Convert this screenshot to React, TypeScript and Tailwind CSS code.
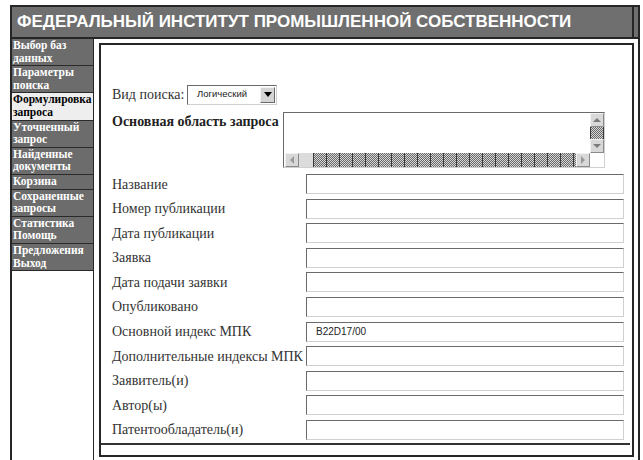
const serif = "font-['Liberation_Serif',serif]";
const sans = "font-['Liberation_Sans',Arial,sans-serif]";

type NavItem = { lines: string[]; active?: boolean };

const navItems: NavItem[] = [
  { lines: ["Выбор баз", "данных"] },
  { lines: ["Параметры", "поиска"] },
  { lines: ["Формулировка", "запроса"], active: true },
  { lines: ["Уточненный", "запрос"] },
  { lines: ["Найденные", "документы"] },
  { lines: ["Корзина"] },
  { lines: ["Сохраненные", "запросы"] },
  { lines: ["Статистика", "Помощь"] },
  { lines: ["Предложения", "Выход"] },
];

const fields: { label: string; value?: string }[] = [
  { label: "Название" },
  { label: "Номер публикации" },
  { label: "Дата публикации" },
  { label: "Заявка" },
  { label: "Дата подачи заявки" },
  { label: "Опубликовано" },
  { label: "Основной индекс МПК", value: "B22D17/00" },
  { label: "Дополнительные индексы МПК" },
  { label: "Заявитель(и)" },
  { label: "Автор(ы)" },
  { label: "Патентообладатель(и)" },
];

// dithered scrollbar track with block separators
const dither =
  "[background:repeating-linear-gradient(90deg,#3a3a3a_0_1px,transparent_1px_13px),repeating-conic-gradient(#6a6a6a_0_25%,#d6d6d6_0_50%)_0_0/2px_2px]";

function ArrowButton({ dir }: { dir: "up" | "down" | "left" | "right" }) {
  const tri = {
    up: "border-x-[4px] border-x-transparent border-b-[4px] border-b-[#7a7a7a]",
    down: "border-x-[4px] border-x-transparent border-t-[4px] border-t-[#7a7a7a]",
    left: "border-y-[4px] border-y-transparent border-r-[4px] border-r-[#9a9a9a]",
    right: "border-y-[4px] border-y-transparent border-l-[4px] border-l-[#9a9a9a]",
  }[dir];
  return (
    <div className="flex h-[14px] w-[14px] items-center justify-center border border-t-[#f2f2f2] border-l-[#f2f2f2] border-r-[#8a8a8a] border-b-[#8a8a8a] bg-[#d8d8d8]">
      <div className={`h-0 w-0 ${tri}`} />
    </div>
  );
}

function QueryArea() {
  return (
    <div className="flex h-[56px] w-[322px] flex-col border border-t-[#6a6a6a] border-l-[#6a6a6a] border-r-[#d0d0d0] border-b-[#d0d0d0] bg-white">
      <div className="flex flex-1">
        <div className="flex-1" />
        <div className="flex w-[14px] flex-col">
          <ArrowButton dir="up" />
          <div className={`flex-1 ${dither}`} />
          <ArrowButton dir="down" />
        </div>
      </div>
      <div className="flex h-[14px] pl-[1px]">
        <ArrowButton dir="left" />
        <div className="w-[14px] bg-[#dcdcdc]" />
        <div className={`flex-1 ${dither}`} />
        <ArrowButton dir="right" />
        <div className="w-[14px] bg-white" />
      </div>
    </div>
  );
}

function SearchTypeSelect() {
  return (
    <div className="flex h-[20px] w-[90px] items-center border border-t-[#6a6a6a] border-l-[#6a6a6a] border-r-[#d0d0d0] border-b-[#d0d0d0] bg-white">
      <span className={`flex-1 pl-[9px] text-[9.5px] text-[#222] ${sans}`}>
        Логический
      </span>
      <div className="mr-[1px] flex h-[16px] w-[15px] items-center justify-center border border-t-[#f2f2f2] border-l-[#f2f2f2] border-r-[#6a6a6a] border-b-[#6a6a6a] bg-[#d4d4d4]">
        <div className="h-0 w-0 border-x-[4px] border-x-transparent border-t-[5px] border-t-black" />
      </div>
    </div>
  );
}

export default function App() {
  return (
    <div className="min-h-[460px] bg-white pl-[10px] pt-[5px]">
      <div className="w-[630px] border-2 border-[#262626]">
        <div className="flex h-[32px] border-b-2 border-[#262626] bg-[#6f6f6f]">
          <div className="flex flex-1 items-center overflow-hidden border-r-2 border-[#262626] pl-[5px]">
            <h1
              className={`whitespace-nowrap text-[17px] font-bold text-white ${sans}`}
            >
              ФЕДЕРАЛЬНЫЙ ИНСТИТУТ ПРОМЫШЛЕННОЙ СОБСТВЕННОСТИ
            </h1>
          </div>
          <div className="w-[4px]" />
        </div>

        <div className="flex h-[425px]">
          <nav className="w-[82px] border-r border-[#262626]">
            {navItems.map((item) => (
              <div
                key={item.lines[0]}
                className={`border-b border-[#2a2a2a] pb-[1px] pl-[1px] text-[11.5px] font-bold leading-[12.6px] ${serif} ${
                  item.active
                    ? "bg-[#eeeeee] text-black"
                    : "bg-[#6c6c6c] text-white"
                }`}
              >
                {item.lines.map((line) => (
                  <div key={line} className="whitespace-nowrap">
                    {line}
                  </div>
                ))}
              </div>
            ))}
          </nav>

          <div className="w-[5px]" />

          <main className="mt-[4px] flex h-[414px] w-[535px] flex-col border-2 border-[#262626] pl-[11px] pt-[39px]">
            <div className="flex items-center">
              <span
                className={`w-[75px] whitespace-nowrap text-[14px] text-[#333] ${serif}`}
              >
                Вид поиска:
              </span>
              <SearchTypeSelect />
            </div>

            <div className="mt-[7px] flex">
              <span
                className={`w-[171px] whitespace-nowrap pt-[1px] text-[14px] font-bold leading-[17px] text-[#222] ${serif}`}
              >
                Основная область запроса
              </span>
              <QueryArea />
            </div>

            <div className="mt-[6px] grid grid-cols-[194px_318px] gap-y-[4.6px]">
              {fields.map((field) => (
                <div key={field.label} className="contents">
                  <span
                    className={`flex h-[20px] items-center whitespace-nowrap text-[14px] text-[#333] ${serif}`}
                  >
                    {field.label}
                  </span>
                  <div className="flex h-[20px] items-center border border-t-[#6a6a6a] border-l-[#6a6a6a] border-r-[#d0d0d0] border-b-[#d0d0d0] bg-white pl-[9px]">
                    {field.value ? (
                      <span className={`text-[10px] text-[#222] ${sans}`}>
                        {field.value}
                      </span>
                    ) : null}
                  </div>
                </div>
              ))}
            </div>

            <div className="-ml-[11px] mt-[3px] h-[2px] w-[529px] bg-[#333]" />
          </main>
        </div>
      </div>
    </div>
  );
}
